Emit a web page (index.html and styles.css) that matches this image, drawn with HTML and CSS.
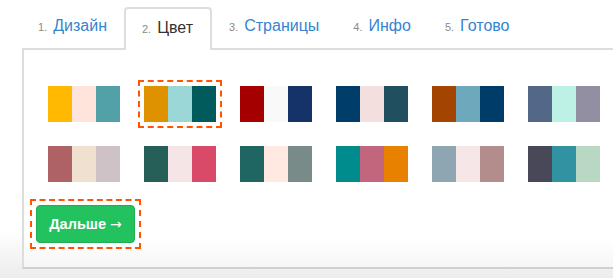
FILE: index.html
```html
<!DOCTYPE html>
<html lang="ru">
<head>
<meta charset="utf-8">
<title>Цвет</title>
<link rel="stylesheet" href="styles.css">
</head>
<body>
<div class="page">
  <ul class="tabs">
    <li class="tab"><span class="num">1.</span><a class="label">Дизайн</a></li>
    <li class="tab active"><span class="num">2.</span><a class="label">Цвет</a></li>
    <li class="tab"><span class="num">3.</span><a class="label">Страницы</a></li>
    <li class="tab"><span class="num">4.</span><a class="label">Инфо</a></li>
    <li class="tab"><span class="num">5.</span><a class="label">Готово</a></li>
  </ul>
  <div class="panel">
    <div class="palettes">
      <div class="palette"><i style="background:#FFB900"></i><i style="background:#FFE4DC"></i><i style="background:#52A0A8"></i></div>
      <div class="palette selected"><i style="background:#DE9200"></i><i style="background:#9CD7D8"></i><i style="background:#015B5D"></i></div>
      <div class="palette"><i style="background:#A50000"></i><i style="background:#F9F9F9"></i><i style="background:#163369"></i></div>
      <div class="palette"><i style="background:#003D6A"></i><i style="background:#F4DFDF"></i><i style="background:#20505F"></i></div>
      <div class="palette"><i style="background:#A34500"></i><i style="background:#6DA8BC"></i><i style="background:#003C69"></i></div>
      <div class="palette"><i style="background:#536788"></i><i style="background:#BDF1E5"></i><i style="background:#928FA2"></i></div>
      <div class="palette"><i style="background:#AF6265"></i><i style="background:#F0E0D0"></i><i style="background:#CEC2C6"></i></div>
      <div class="palette"><i style="background:#265F58"></i><i style="background:#F6E5E7"></i><i style="background:#D84A67"></i></div>
      <div class="palette"><i style="background:#1F6561"></i><i style="background:#FFE9E1"></i><i style="background:#788B88"></i></div>
      <div class="palette"><i style="background:#008B8C"></i><i style="background:#C1667C"></i><i style="background:#E88000"></i></div>
      <div class="palette"><i style="background:#8DA6B1"></i><i style="background:#F7E6E8"></i><i style="background:#B38D8B"></i></div>
      <div class="palette"><i style="background:#494859"></i><i style="background:#3193A1"></i><i style="background:#B9D8C4"></i></div>
    </div>
    <div class="next-wrap">
      <button class="next">Дальше <span class="arrow">→</span></button>
    </div>
  </div>
</div>
</body>
</html>
```

FILE: styles.css
```css
html, body {
  margin: 0;
  padding: 0;
  height: 278px;
  overflow: hidden;
}
body {
  font-family: "Liberation Sans", Arial, sans-serif;
  background: linear-gradient(to bottom, #ffffff 0, #ffffff 230px, #ececec 278px);
}
.page {
  padding-top: 7px;
}
.tabs {
  list-style: none;
  margin: 0 0 0 21px;
  padding: 0;
  display: flex;
  align-items: flex-end;
  position: relative;
  z-index: 1;
}
.tab {
  display: flex;
  align-items: baseline;
  box-sizing: border-box;
  height: 43px;
  padding: 7px 15px 0;
  border: 2px solid transparent;
  border-bottom: none;
  border-radius: 4px 4px 0 0;
  margin-bottom: -2px;
  line-height: 20px;
}
.tab.active {
  border-color: #dddddd;
  background: #ffffff;
  padding-top: 9px;
  padding-left: 16px;
  padding-right: 17px;
}
.num {
  font-size: 11px;
  color: #8a8a8a;
  margin-right: 6px;
}
.label {
  font-size: 16px;
  color: #3584d2;
}
.active .label {
  color: #333333;
}
.panel {
  margin-left: 22px;
  margin-right: -40px;
  border: 2px solid #dddddd;
  border-bottom-color: #d0d0d0;
  box-sizing: border-box;
  height: 221px;
  padding: 24px 12px;
  background: linear-gradient(to bottom, #ffffff 0, #ffffff calc(100% - 28px), #f6f6f6 100%);
}
.palettes {
  display: flex;
  flex-wrap: wrap;
  width: 576px;
}
.palette {
  display: flex;
  width: 72px;
  height: 36px;
  margin: 12px;
}
.palette i {
  flex: 1;
}
.palette.selected {
  outline: 2px dashed #ff5400;
  outline-offset: 4px;
}
.next-wrap {
  display: inline-flex;
  margin-top: 11px;
  outline: 2px dashed #ff5400;
  outline-offset: 4px;
}
.next {
  display: block;
  box-sizing: border-box;
  height: 38px;
  width: 99px;
  padding: 0;
  border: 1px solid #1faf55;
  border-radius: 4px;
  background: #22c35f;
  color: #ffffff;
  font-family: "Liberation Sans", Arial, sans-serif;
  font-size: 14.5px;
  font-weight: 700;
  line-height: 20px;
}
.arrow {
  font-family: "DejaVu Sans", sans-serif;
  font-weight: 400;
  font-size: 14px;
}
```
